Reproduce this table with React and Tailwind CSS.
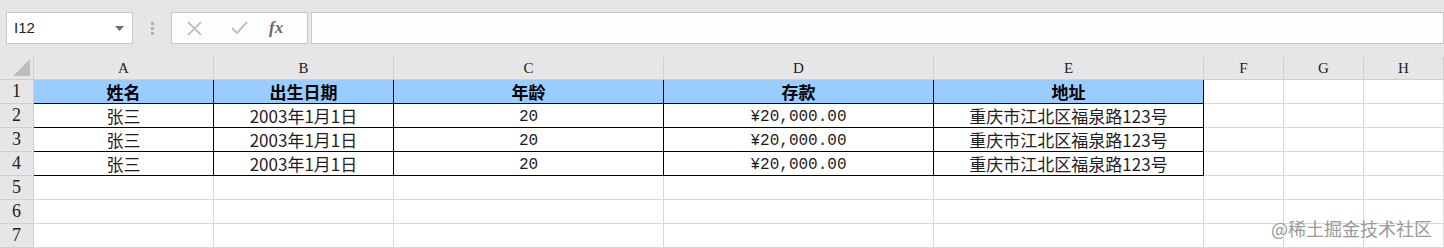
import React from 'react';

const COLS = ['A', 'B', 'C', 'D', 'E', 'F', 'G', 'H'];
const HEAD = ['姓名', '出生日期', '年龄', '存款', '地址'];
const ROW = ['张三', '2003年1月1日', '20', '¥20,000.00', '重庆市江北区福泉路123号'];

const cjk = "font-['Noto_Sans_CJK_SC','Noto_Sans',sans-serif]";
const mono = "font-['Liberation_Mono',monospace]";
const serif = "font-['Liberation_Serif','Noto_Sans_CJK_SC',serif]";

function Toolbar() {
  return (
    <div className="h-[57px] flex items-start pt-[12px]">
      {/* name box */}
      <div className="ml-[6px] w-[127px] h-[32px] bg-white border border-[#c8c8c8] flex items-center justify-between pl-[7px] pr-[8px]">
        <span className="text-[15px] text-[#222] font-['Liberation_Sans',sans-serif]">I12</span>
        <svg width="9" height="5" viewBox="0 0 9 5">
          <path d="M0 0h9L4.5 5z" fill="#6e6e6e" />
        </svg>
      </div>
      <div className="w-[38px] h-[32px] flex flex-col items-center justify-center gap-[2px]">
        <span className="w-[3px] h-[3px] bg-[#b0b0b0]" />
        <span className="w-[3px] h-[3px] bg-[#b0b0b0]" />
        <span className="w-[3px] h-[3px] bg-[#b0b0b0]" />
      </div>
      {/* cancel / enter / fx */}
      <div className="w-[137px] h-[32px] bg-[#fdfdfd] border border-[#c8c8c8] flex items-center pl-[15px]">
        <svg width="15" height="15" viewBox="0 0 15 15">
          <path d="M1 1l13 13M14 1L1 14" stroke="#b4b4b4" strokeWidth="1.5" />
        </svg>
        <svg className="ml-[29px]" width="17" height="14" viewBox="0 0 17 14">
          <path d="M1 7l5 5L16 1" stroke="#c4c4c4" strokeWidth="2.2" fill="none" />
        </svg>
        <span className={`ml-[21px] text-[17px] italic font-bold text-[#6a6a6a] ${serif}`}>fx</span>
      </div>
      <div className="ml-[3px] flex-1 h-[32px] bg-[#fdfdfd] border border-[#c8c8c8]" />
    </div>
  );
}

function Cell({ children, className = '' }) {
  return (
    <div className={`flex items-center justify-center border-r border-b whitespace-nowrap ${className}`}>
      {children}
    </div>
  );
}

export default function App() {
  const rows = [1, 2, 3, 4, 5, 6, 7];
  return (
    <div className="relative w-[1444px] h-[248px] overflow-hidden bg-[#e6e6e6]">
      <Toolbar />
      <div className="grid grid-cols-[34px_180px_180px_270px_270px_270px_80px_80px_80px] grid-rows-[23px_repeat(7,24px)]">
        {/* corner */}
        <div className="relative border-r border-b border-[#cfcfcf] bg-[#e6e6e6]">
          <svg className="absolute right-[3px] bottom-[3px]" width="17" height="17" viewBox="0 0 17 17">
            <path d="M17 0v17H0z" fill="#bdbdbd" />
          </svg>
        </div>
        {COLS.map((c) => (
          <Cell key={c} className={`border-[#cfcfcf] bg-[#e6e6e6] text-[15px] text-[#222] ${serif}`}>
            {c}
          </Cell>
        ))}
        {rows.map((r) => (
          <React.Fragment key={r}>
            <Cell className={`border-[#cfcfcf] bg-[#e6e6e6] text-[18px] text-[#222] ${serif}`}>{r}</Cell>
            {COLS.map((c, i) => {
              const filled = r <= 4 && i < 5;
              if (!filled) {
                return <Cell key={c} className="border-[#d9d9d9] bg-white" />;
              }
              if (r === 1) {
                return (
                  <Cell key={c} className={`border-black bg-[#99ccff] text-[17px] font-bold text-black ${cjk}`}>
                    {HEAD[i]}
                  </Cell>
                );
              }
              const isMono = i === 2 || i === 3;
              return (
                <Cell
                  key={c}
                  className={`border-black bg-white text-[#1e1e1e] ${isMono ? `pt-[3px] text-[16px] leading-none ${mono}` : `text-[17px] ${cjk}`}`}
                >
                  {ROW[i]}
                </Cell>
              );
            })}
          </React.Fragment>
        ))}
      </div>
      <span className={`absolute right-[12px] bottom-[11px] leading-none text-[18px] text-[#9a9a9a] ${cjk}`}>
        @稀土掘金技术社区
      </span>
    </div>
  );
}
